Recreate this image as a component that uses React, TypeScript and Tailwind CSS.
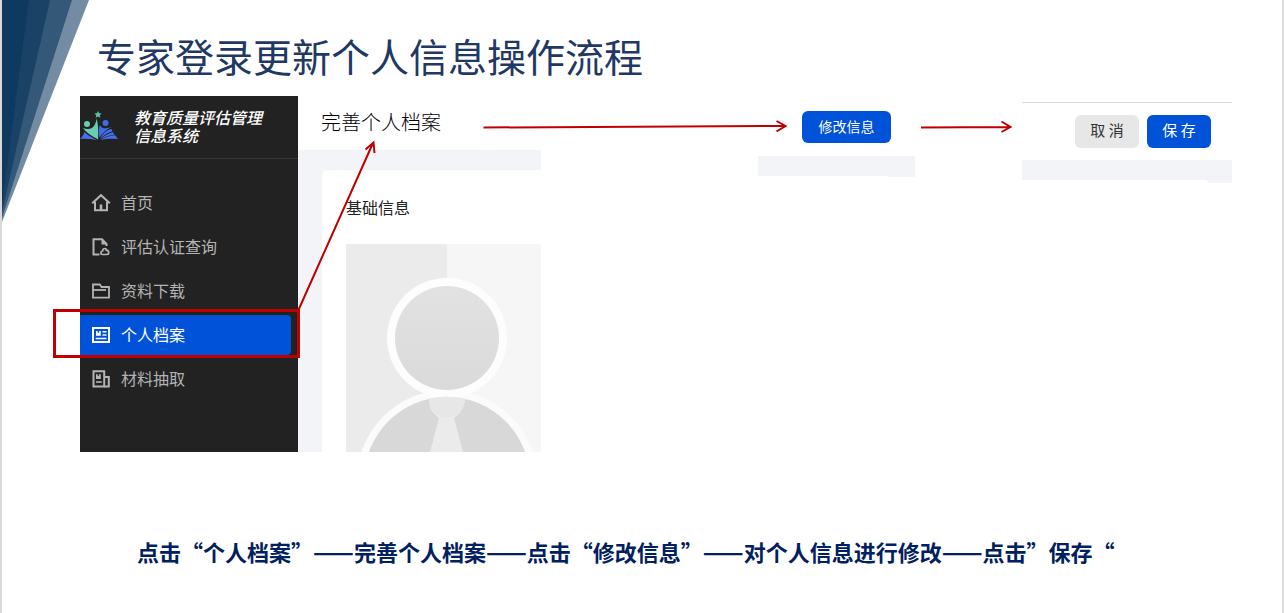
import type { ReactNode } from "react";

const strokeProps = {
  fill: "none",
  stroke: "currentColor",
  strokeWidth: 2,
} as const;

function HomeIcon() {
  return (
    <svg viewBox="0 0 20 20" className="size-5 shrink-0" aria-hidden="true" {...strokeProps}>
      <path d="M1.200 10.200 10 2.200l8.800 8" />
      <path d="M4 8.500v8.800h12V8.500" />
      <path d="M10 17.500v-6" strokeWidth={2.500} />
    </svg>
  );
}

function QueryIcon() {
  return (
    <svg viewBox="0 0 20 20" className="size-5 shrink-0" aria-hidden="true" {...strokeProps}>
      <path d="M8.500 17.500H2.500V2.300h8.500l4.500 4.500v2.200" />
      <path d="M10.500 2v5.500H16z" fill="currentColor" stroke="none" />
      <path d="M14 11.500c1 0 1.400.8 1.300 1.700 1.400.2 2.400 1 2.400 2.200s-.9 2.100-2 2.100h-4c-1.100 0-1.800-.8-1.800-1.700 0-1 .7-1.700 1.800-2-.2-1.300.9-2.300 2.300-2.300z" strokeWidth={1.700} />
    </svg>
  );
}

function FolderIcon() {
  return (
    <svg viewBox="0 0 20 20" className="size-5 shrink-0" aria-hidden="true" {...strokeProps}>
      <path d="M2 16.700V3.500h6.800l1.700 2.500H18v10.700z" strokeWidth={1.800} />
      <path d="M2 9h13" strokeWidth={1.800} />
    </svg>
  );
}

function ProfileIcon() {
  return (
    <svg viewBox="0 0 20 20" className="size-5 shrink-0" aria-hidden="true" {...strokeProps}>
      <rect x="2" y="3" width="16" height="14" />
      <path d="M5 6h4.800v4.800H5z" fill="currentColor" stroke="none" />
      <path d="M6.600 6h1.600v1.700H6.600z" fill="#0052d9" stroke="none" />
      <path d="M11.500 6.800h4M11.500 9.900h4M4.700 13.500h10.800" strokeWidth={1.500} />
    </svg>
  );
}

function MaterialIcon() {
  return (
    <svg viewBox="0 0 20 20" className="size-5 shrink-0" aria-hidden="true" {...strokeProps}>
      <path d="M2.500 2.300h10.700v15.200H2.500z" />
      <path d="M13.200 8h4.600v9.500h-4.600" />
      <path d="M5 5.200h4.800V10H5z" fill="currentColor" stroke="none" />
      <path d="M6.600 5.200h1.500v1.600H6.600z" fill="#222222" stroke="none" />
      <path d="M5 13h5.800" strokeWidth={1.600} />
    </svg>
  );
}

function Logo() {
  return (
    <svg viewBox="0 0 38 32" className="h-8 w-[38px] shrink-0" aria-hidden="true">
      <path d="m18 0 1.100 2.200 2.500.3-1.800 1.700.5 2.500L18 5.500l-2.300 1.200.5-2.500-1.800-1.700 2.500-.3z" fill="#55c7a4" />
      <circle cx="7" cy="13" r="3" fill="#67cfb0" />
      <circle cx="25.500" cy="12" r="3" fill="#3f6be6" />
      <path d="M3 17c3 1.200 6.200 1.300 8.500.2 2.800-1.600 4.500-5 5.200-9.700 1.500 6 1.900 13 1.400 21C13 25.500 7 22.500 3 17z" fill="#67cfb0" />
      <path d="M19.500 26.500c-.9-5-.8-9 .2-12.500 1.200 2 2.600 3 4.400 3.200 2.600.3 5.600-.2 8.400-1.600-5 2.500-9.500 5.900-13 10.900z" fill="#3f6be6" />
      <path d="M0 28c2.300-2 3.700-4.300 4.500-7 3 3 7.500 5.500 12 8C11 28 5.500 27.500 0 28z" fill="#4672f0" />
      <path d="M20 28c2.200-4.700 5.700-8.200 11.200-10.200l1.300 2.500C27.300 21.700 23.300 24.300 20 28z" fill="#4672f0" />
      <path d="M20.600 28.500c3.200-3.600 7.200-6 12.200-7.300l1.700 2.600c-5 .5-9.700 2-13.900 4.700z" fill="#4672f0" />
      <path d="M20.600 29.300c4.200-2.900 9.200-4.700 14.500-5l2.900 3.700c-6.200-.5-12.200-.4-17.400 1.300z" fill="#4672f0" />
    </svg>
  );
}

function Avatar() {
  return (
    <svg viewBox="0 0 195 208" className="block h-[208px] w-full" preserveAspectRatio="xMinYMin slice" role="img" aria-label="头像">
      <defs>
        <linearGradient id="head" x1="0" y1="0" x2="0" y2="1">
          <stop offset="0" stopColor="#e2e2e2" />
          <stop offset="1" stopColor="#dadada" />
        </linearGradient>
      </defs>
      <rect width="195" height="208" fill="#f6f6f6" />
      <rect width="101" height="208" fill="#ebebeb" />
      <circle cx="101" cy="236" r="90" fill="#fbfbfb" />
      <circle cx="101" cy="94" r="60" fill="#fdfdfd" />
      <circle cx="101" cy="94" r="52" fill="url(#head)" />
      <circle cx="101" cy="236" r="83" fill="#d8d8d8" />
      <path d="M83 155c11-3 25-3 36 0-1 9-4 14-11 19l9 34H84l9-34c-7-5-10-10-10-19z" fill="#ebebeb" />
      <path d="M83 155c11-3 25-3 36 0-1 9-4 14-11 17-5 2-9 2-14 0-7-3-10-8-11-17z" fill="#e7e7e7" />
    </svg>
  );
}

function MenuItem({ icon, label, active = false }: { icon: ReactNode; label: string; active?: boolean }) {
  return (
    <li>
      <a
        href="#"
        aria-current={active ? "page" : undefined}
        className={
          active
            ? "mr-[7px] flex h-10 items-center gap-2.5 rounded-r-sm bg-[#0052d9] pl-[11px] text-base text-white"
            : "mr-[7px] flex h-10 items-center gap-2.5 pl-[11px] text-base text-[#b4b4b4]"
        }
      >
        {icon}
        <span className="pb-0.5">{label}</span>
      </a>
    </li>
  );
}

function Wedge() {
  return (
    <svg width="88" height="223" viewBox="0 0 88 223" className="absolute top-0 left-0" aria-hidden="true">
      <path d="M0 0h87L0 222z" fill="#738ca3" />
      <path d="M0 0h70L0 218z" fill="#345978" />
      <path d="M0 0h48L0 212z" fill="#1a4266" />
      <path d="M0 0h27L0 205z" fill="#0f3a5f" />
    </svg>
  );
}

function Annotations() {
  return (
    <svg width="1012" height="360" viewBox="0 0 1012 360" className="pointer-events-none absolute top-0 left-0" aria-hidden="true">
      <g fill="none" stroke="#c00000" strokeWidth="2">
        <rect x="54.500" y="310.500" width="244" height="46" strokeWidth="3" />
        <path d="M298 311 373 143M365.500 149.500l8-7 1 10.500" />
        <path d="M483.500 127.500 785 126M776.500 121l9 5-9 5.500" />
        <path d="M921 127.500 1010 127M1001.500 121.500l9 5.500-9 5" />
      </g>
    </svg>
  );
}

const steps = [
  "点击“个人档案”",
  "——",
  "完善个人档案",
  "——",
  "点击“修改信息”",
  "——",
  "对个人信息进行修改",
  "——",
  "点击”保存“",
];

export default function App() {
  return (
    <main
      lang="zh-CN"
      className="relative min-h-screen overflow-hidden bg-white font-['Noto_Sans_CJK_SC',sans-serif]"
    >
      <div className="min-h-screen border-r-2 border-l-2 border-[#d9d9d9]">
        <div className="relative">
          <Wedge />
        </div>
        <h1 className="pt-[31px] pl-[95px] text-[39px] leading-[48px] text-[#1f3864]">
          专家登录更新个人信息操作流程
        </h1>

        <div className="mt-[17px] flex items-start pr-[50px] pl-[78px]">
          <section className="flex h-[356px] w-[461px] shrink-0">
            <aside className="w-[218px] shrink-0 bg-[#222222]">
              <div className="flex h-[63px] items-center gap-4 border-b border-[#383838]">
                <Logo />
                <p className="pb-0.5 text-base leading-[18px] font-medium text-white italic">
                  教育质量评估管理
                  <br />
                  信息系统
                </p>
              </div>
              <nav className="pt-6">
                <ul className="flex flex-col gap-1">
                  <MenuItem icon={<HomeIcon />} label="首页" />
                  <MenuItem icon={<QueryIcon />} label="评估认证查询" />
                  <MenuItem icon={<FolderIcon />} label="资料下载" />
                  <MenuItem icon={<ProfileIcon />} label="个人档案" active />
                  <MenuItem icon={<MaterialIcon />} label="材料抽取" />
                </ul>
              </nav>
            </aside>
            <div className="flex flex-1 flex-col bg-[#f3f4f8]">
              <h2 className="h-[54px] bg-white pl-[23px] text-xl leading-[52px] font-light text-black">
                完善个人档案
              </h2>
              <div className="mt-5 ml-6 flex-1 rounded-tl-md bg-white pl-6">
                <h3 className="pt-[25px] pb-[25px] text-base leading-6 text-[#222222]">基础信息</h3>
                <Avatar />
              </div>
            </div>
          </section>

          <div className="flex-1" />

          <section className="w-[157px] shrink-0">
            <div className="flex h-[60px] justify-end pt-[15px] pr-6">
              <button type="button" className="h-8 w-[89px] rounded-md bg-[#0052d9] pb-0.5 text-sm text-white">
                修改信息
              </button>
            </div>
            <div className="flex h-[21px] items-end bg-[#f3f4f8] pr-7">
              <div className="h-px flex-1 bg-white" />
            </div>
          </section>

          <div className="w-[107px] shrink-0" />

          <section className="mt-1.5 w-[210px] shrink-0 border-t border-[#dcdcdc]">
            <div className="flex h-[57px] justify-end gap-2 pt-3 pr-[21px]">
              <button type="button" className="h-[33px] w-16 rounded-md bg-[#e7e7e7] pb-0.5 text-[15px] text-[#333333]">
                取 消
              </button>
              <button type="button" className="h-[33px] w-16 rounded-md bg-[#0052d9] pb-0.5 text-[15px] text-white">
                保 存
              </button>
            </div>
            <div className="flex h-[23px] items-end bg-[#f3f4f8] pr-6">
              <div className="h-[3px] flex-1 rounded-tr-sm bg-white" />
            </div>
          </section>
        </div>

        <p className="mt-[83px] flex items-center pl-[135px] text-[22px] leading-8 font-bold whitespace-nowrap text-[#002060]">
          {steps.map((step, index) => (
            <span key={index} className={step === "——" ? "text-2xl" : ""}>
              {step}
            </span>
          ))}
        </p>
      </div>
      <Annotations />
    </main>
  );
}
